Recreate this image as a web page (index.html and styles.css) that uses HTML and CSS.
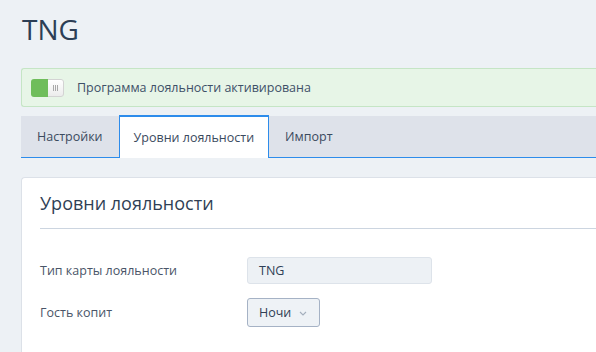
FILE: index.html
```html
<!DOCTYPE html>
<html lang="ru">
<head>
  <meta charset="UTF-8">
  <meta name="viewport" content="width=device-width, initial-scale=1.0">
  <title>TNG</title>
  <link rel="stylesheet" href="styles.css">
</head>
<body>
  <h1 class="page-title">TNG</h1>

  <!-- Status -->
  <div class="alert">
    <span class="toggle">
      <span class="toggle-on"></span>
      <span class="toggle-knob"><i></i><i></i><i></i></span>
    </span>
    <span class="alert-text">Программа лояльности активирована</span>
  </div>

  <!-- Tabs -->
  <div class="tabs">
    <div class="tab">Настройки</div>
    <div class="tab active">Уровни лояльности</div>
    <div class="tab">Импорт</div>
  </div>

  <!-- Levels card -->
  <div class="card">
    <h2 class="card-title">Уровни лояльности</h2>
    <div class="form">
      <div class="row">
        <label class="label">Тип карты лояльности</label>
        <div class="input">TNG</div>
      </div>
      <div class="row">
        <label class="label">Гость копит</label>
        <div class="select">
          Ночи
          <svg class="chevron" width="8" height="5" viewBox="0 0 8 5">
            <path d="M1 1 L4 4 L7 1" fill="none" stroke="#a4afbd" stroke-width="1.1"/>
          </svg>
        </div>
      </div>
    </div>
  </div>
</body>
</html>
```

FILE: styles.css
```css
body {
  font-family: "Open Sans", "Liberation Sans", sans-serif;
  margin: 0;
  padding: 10px 0 0 21px;
  background-color: #edf1f5;
  color: #3b4a5e;
  overflow: hidden;
}
.page-title {
  font-size: 28px;
  font-weight: 400;
  line-height: 38px;
  margin: 0 0 20px 1px;
  color: #2c3e55;
}
.alert {
  display: flex;
  align-items: center;
  height: 37px;
  padding: 0 9px;
  background-color: #e7f5e7;
  border: 1px solid #c5e5c5;
  border-right: none;
  border-radius: 3px 0 0 3px;
  margin-bottom: 9px;
}
.toggle {
  display: flex;
  width: 33px;
  height: 18px;
  border-radius: 3px;
  overflow: hidden;
  margin-top: 1px;
}
.toggle-on {
  width: 17px;
  background-color: #6fbd5b;
}
.toggle-knob {
  flex: 1;
  display: flex;
  justify-content: center;
  align-items: center;
  gap: 1px;
  background: linear-gradient(#ffffff, #ececec);
  border: 1px solid #d3d3d3;
  border-left: none;
  border-radius: 0 3px 3px 0;
}
.toggle-knob i {
  width: 1px;
  height: 6px;
  background-color: #a8a8a8;
}
.alert-text {
  margin-left: 13px;
  font-size: 12.5px;
  color: #3e5068;
}
.tabs {
  display: flex;
  height: 41px;
  background-color: #dee2ea;
  border-bottom: 1px solid #2d8ceb;
  margin-bottom: 19px;
}
.tab {
  padding: 0 16px;
  font-size: 12.5px;
  line-height: 41px;
  color: #3b4a5e;
}
.tab.active {
  background-color: #ffffff;
  border: 1px solid #2d8ceb;
  border-top-width: 2px;
  border-bottom: none;
  margin-top: -1px;
  margin-bottom: -1px;
  line-height: 41px;
  padding: 0 14px;
}
.card {
  background-color: #ffffff;
  border: 1px solid #dce1e8;
  border-right: none;
  border-radius: 4px 0 0 0;
  padding: 13px 0 40px 18px;
}
.card-title {
  font-size: 18px;
  font-weight: 400;
  line-height: 24px;
  margin: 0;
  padding-bottom: 13px;
  border-bottom: 1px solid #ccd5e0;
  color: #2f3f55;
}
.form {
  display: flex;
  flex-direction: column;
  gap: 14px;
  padding-top: 28px;
}
.row {
  display: flex;
  align-items: center;
}
.label {
  width: 207px;
  font-size: 12.5px;
  color: #4a5568;
}
.input {
  box-sizing: border-box;
  width: 185px;
  height: 27px;
  padding: 0 11px;
  font-size: 12.5px;
  line-height: 25px;
  color: #2f3f55;
  background-color: #edf1f5;
  border: 1px solid #dde3ea;
  border-radius: 3px;
}
.select {
  box-sizing: border-box;
  display: flex;
  align-items: center;
  gap: 8px;
  width: 73px;
  height: 29px;
  padding: 0 11px;
  font-size: 12.5px;
  color: #2f3f55;
  background-color: #eef2f6;
  border: 1px solid #a5b2c5;
  border-radius: 3px;
}
.chevron {
  margin-top: 1px;
}
```
